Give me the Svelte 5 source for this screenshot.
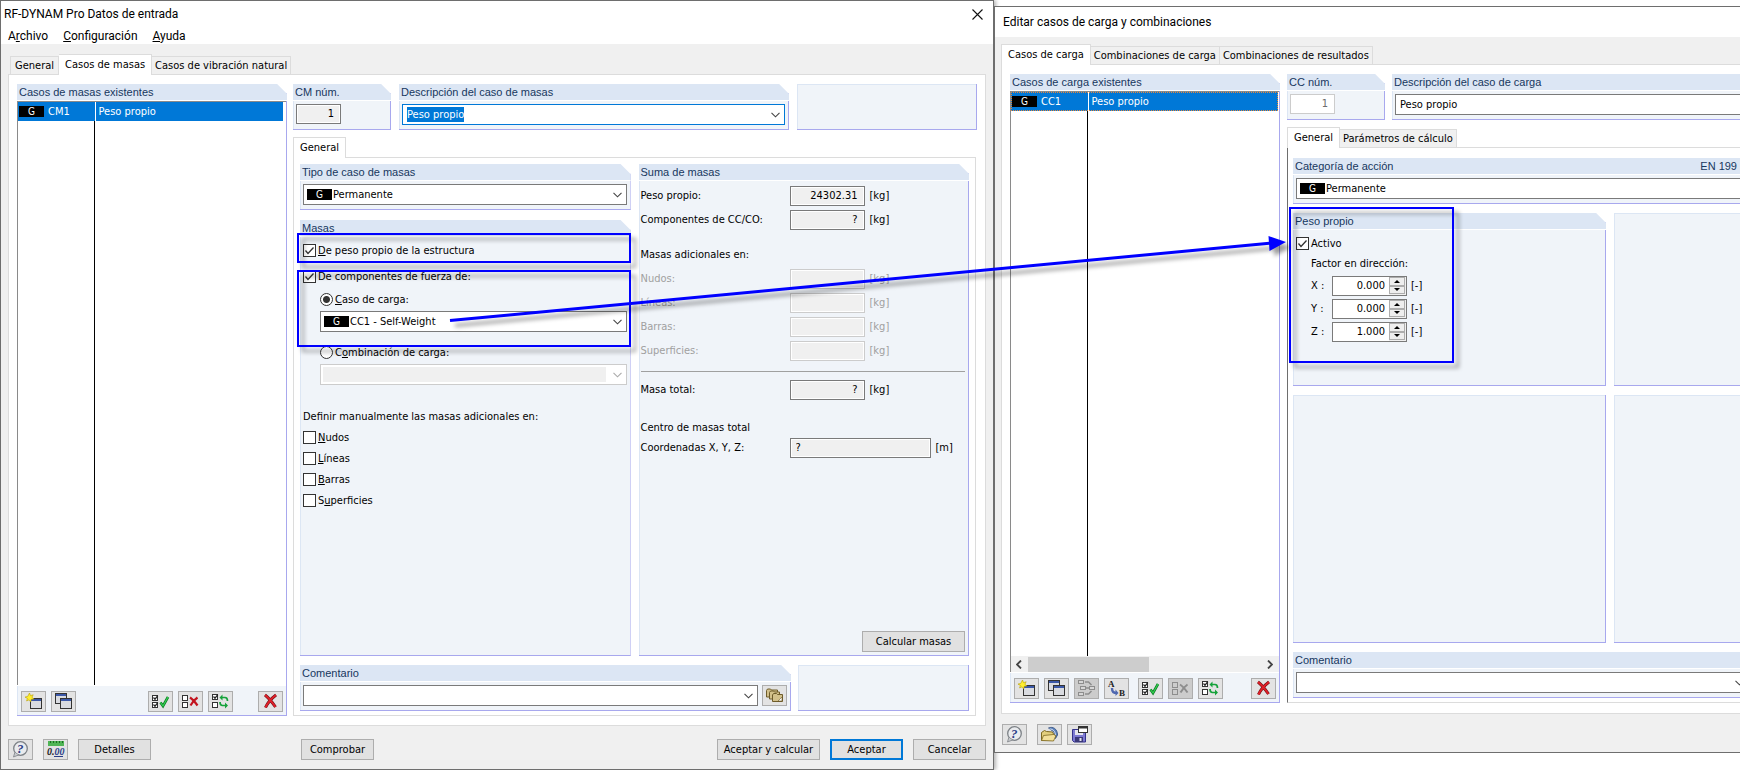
<script lang="ts">
  import { onMount } from "svelte";

  let description = $state("Peso propio");
  let descInput: HTMLInputElement | undefined = $state();

  const sums = [
    { id: "s-self", label: "Peso propio:", value: "24302.31" },
    { id: "s-cc", label: "Componentes de CC/CO:", value: "?" },
  ];
  const extraSums = ["Nudos", "Líneas", "Barras", "Superficies"];
  const extraMasses = [
    { pre: "", key: "N", post: "udos" },
    { pre: "", key: "L", post: "íneas" },
    { pre: "", key: "B", post: "arras" },
    { pre: "S", key: "u", post: "perficies" },
  ];
  let factors = $state([
    { axis: "X", value: "0.000" },
    { axis: "Y", value: "0.000" },
    { axis: "Z", value: "1.000" },
  ]);

  function step(i: number, d: number) {
    factors[i].value = (parseFloat(factors[i].value) + d).toFixed(3);
  }

  onMount(() => {
    descInput?.focus();
    descInput?.select();
  });
</script>

{#snippet chevron()}
  <svg class="chevron" width="9" height="6" viewBox="0 0 9 6"><path d="M.5 .8 4.5 4.8 8.5 .8" fill="none" stroke="currentColor" stroke-width="1.1" /></svg>
{/snippet}

{#snippet miniWindow(x: number, y: number)}
  <rect x={x + 0.5} y={y + 0.5} width="11" height="10" fill="#d9dbe0" stroke="#333" />
  <rect x={x + 1} y={y + 1} width="10" height="2" fill="#3b58a8" />
{/snippet}

{#snippet tick(x: number, y: number, on: boolean)}
  <rect x={x + 0.5} y={y + 0.5} width="5" height="5" fill="#fff" stroke="#333" />
  {#if on}<path d="M{x + 1.5} {y + 2.5}l1.5 1.7 2.8-3.6" fill="none" stroke="#222" stroke-width="1.2" />{/if}
{/snippet}

{#snippet icon(name: string)}
  <svg width="19" height="17" viewBox="0 0 19 17">
    {#if name === "new"}
      {@render miniWindow(6, 5)}
      <path d="M5.5 0l1 2.6 2.7-.8-1.3 2.5 2.1 1.7-2.8.3-.5 2.7-1.6-2.200-2.500 1.200.8-2.600-2.400-1.300 2.700-.7z" fill="#ffee2e" stroke="#b8a000" stroke-width=".6" />
    {:else if name === "copy"}
      {@render miniWindow(1, 0)}
      {@render miniWindow(6, 5)}
    {:else if name === "check"}
      {@render tick(1, 2, true)}
      {@render tick(1, 9, true)}
      <path d="M9.5 9.5l2.5 3.5 5-9" fill="none" stroke="#0b7a22" stroke-width="2.6" />
      <path d="M9.5 9.5l2.5 3.5 5-9" fill="none" stroke="#35d352" stroke-width="1.2" />
    {:else if name === "uncheck"}
      {@render tick(1, 2, false)}
      {@render tick(1, 9, false)}
      <path d="M9 4.5c3 2 5 4.5 7.5 8M16.5 4.5c-3 2-5 4.5-7 8" fill="none" stroke="#c3131d" stroke-width="2.2" />
    {:else if name === "uncheck-off"}
      <g fill="none" stroke="#8d8d8d">
        <rect x="1.5" y="2.5" width="5" height="5" />
        <rect x="1.5" y="9.5" width="5" height="5" />
        <path d="M9 4.5c3 2 5 4.5 7.5 8M16.5 4.5c-3 2-5 4.5-7 8" stroke-width="2" />
      </g>
    {:else if name === "invert"}
      {@render tick(1, 1, true)}
      {@render tick(1, 9, false)}
      <path d="M10.500 4.500h3.500c2 0 2.500 1 2.500 3.500M16 12.500h-4.500c-2 0-2.500-1-2.500-3.500" fill="none" stroke="#16a23a" stroke-width="1.7" />
      <path d="M11.500 1.500v6L8.500 4.500zM14 9.500v6l3-3z" fill="#16a23a" />
    {:else if name === "delete"}
      <path d="M4 2c4 3 7 7 10.500 12M15 2c-4 3-8 7-10.500 12.500" fill="none" stroke="#6b1015" stroke-width="3" />
      <path d="M4 2c4 3 7 7 10.500 12M15 2c-4 3-8 7-10.500 12.500" fill="none" stroke="#e02028" stroke-width="2" />
    {:else if name === "tree"}
      <g fill="#d6d6d6" stroke="#8d8d8d">
        <rect x="1.5" y=".5" width="5" height="3" />
        <rect x="3.5" y="6.500" width="5" height="3" />
        <rect x="1.5" y="12.5" width="5" height="3" />
        <rect x="12.5" y="6.500" width="5" height="3" />
        <path d="M8 2h3.500l3 3M8 14h3.500l3-3M9 8h3" fill="none" stroke-width="1.5" />
      </g>
    {:else if name === "rename"}
      <text x="1" y="7" font-family="Liberation Serif, serif" font-size="9" font-weight="700" fill="#222">A</text>
      <path d="M5 8c0 4 1.500 5 5 5" fill="none" stroke="#4f68b0" stroke-width="2.4" />
      <path d="M8.500 9.500v6.500l3-3z" fill="#4f68b0" />
      <text x="12" y="16" font-family="Liberation Serif, serif" font-size="9" font-weight="700" fill="#222">B</text>
    {:else if name === "help"}
      <circle cx="9.500" cy="7.500" r="6.8" fill="#e9ebee" stroke="#7d8287" stroke-width="1.3" />
      <path d="M3.800 11.500 2.500 16l5-2" fill="#c9ccd0" stroke="#7d8287" stroke-width=".8" />
      <text x="6" y="12" font-family="Liberation Serif, serif" font-size="13" font-weight="700" font-style="italic" fill="#2a3d87">?</text>
    {:else if name === "units"}
      <rect x="2" y="0" width="16" height="5" fill="#4fb455" />
      <path d="M4.500 0v2M7.500 0v2M10.500 0v2M13.500 0v2M16.500 0v2" stroke="#1b6e22" />
      <text x="1" y="14" font-family="Liberation Serif, serif" font-size="10" font-weight="700" font-style="italic" fill="#222">0.<tspan fill="#2a3d87">00</tspan></text>
      <path d="M8 15.500h9" stroke="#2a3d87" />
    {:else if name === "cards"}
      <g fill="#d2c08a" stroke="#6e5c2a">
        <path d="M1.500 3.500l1-1.500h3l1 1h6v7h-11z" />
        <path d="M4.500 5.500l1-1.500h3l1 1h5v7h-10z" />
        <path d="M7.500 8l1-1.500h3l1 1h5v7h-10z" />
      </g>
      <path d="M13 14l4-4v4z" fill="#fff" stroke="#6e5c2a" stroke-width=".6" />
    {:else if name === "open"}
      <path d="M8.500 2C13 0 17.500 3 17.500 9l-2 3.500L14 6z" fill="#5d83bd" stroke="#28467a" stroke-width=".8" />
      <path d="M9.500 3c3.500 0 5.500 2 6 6" fill="none" stroke="#dfe9f7" />
      <path d="M1.500 14.500V6.500l3-2 2 1 6 .5 1 2v6.500z" fill="#e3cf7c" stroke="#7d6820" />
      <path d="M1.500 14.500l2-5 10-1 2.500 1-2.500 5.500z" fill="#f3e09a" stroke="#7d6820" stroke-width=".8" />
    {:else if name === "save"}
      <path d="M2.500 3.500h13v12.500H4L2.500 14.500z" fill="#7d79d2" stroke="#34328a" />
      <rect x="5" y="11" width="8" height="5" fill="#3a3878" />
      <rect x="9.500" y="12" width="2" height="3" fill="#e4e4ee" />
      <rect x="5" y="4" width="8" height="5" fill="#e4e4ee" />
      <rect x="8.500" y=".5" width="9" height="6" fill="#fff" stroke="#333" />
      <path d="M8 1.500h10" stroke="#333" stroke-width="2" />
    {/if}
  </svg>
{/snippet}

{#snippet tool(name: string, label: string, off = false)}
  <button class="tool" aria-label={label} disabled={off}>{@render icon(name)}</button>
{/snippet}

{#snippet caseTable(code: string, focus: boolean)}
  <table class:focus>
    <tbody>
      <tr>
        <td class="code"><span class="badge">G</span>{code}</td>
        <td>Peso propio</td>
      </tr>
    </tbody>
  </table>
{/snippet}

<main class="desktop">
  <section class="window dynam">
    <header class="caption">
      <h1>RF-DYNAM Pro Datos de entrada</h1>
      <button class="close" aria-label="Cerrar">
        <svg width="11" height="11" viewBox="0 0 11 11"><path d="M.5 .5l10 10M10.5 .5l-10 10" stroke="#111" stroke-width="1.1" /></svg>
      </button>
    </header>
    <nav class="menu">
      <button>A<u>r</u>chivo</button>
      <button><u>C</u>onfiguración</button>
      <button><u>A</u>yuda</button>
    </nav>

    <div class="client">
      <div class="tabs">
        <button>General</button>
        <button class="active">Casos de masas</button>
        <button>Casos de vibración natural</button>
      </div>
      <div class="page">
        <div class="group cases">
          <h2>Casos de masas existentes</h2>
          <div class="list">{@render caseTable("CM1", false)}</div>
          <div class="toolbar">
            <div class="tools">
              {@render tool("new", "Nuevo")}
              {@render tool("copy", "Copiar")}
            </div>
            <div class="tools middle">
              {@render tool("check", "Seleccionar todo")}
              {@render tool("uncheck", "Deseleccionar todo")}
              {@render tool("invert", "Invertir selección")}
            </div>
            {@render tool("delete", "Eliminar")}
          </div>
        </div>

        <div class="detail">
          <div class="top">
            <div class="group number">
              <h2><label for="cm-no">CM núm.</label></h2>
              <div class="body"><input id="cm-no" class="field short" value="1" readonly /></div>
            </div>
            <div class="group grow">
              <h2><label for="cm-desc">Descripción del caso de masas</label></h2>
              <div class="body">
                <div class="combo editing">
                  <input id="cm-desc" bind:this={descInput} bind:value={description} />
                  {@render chevron()}
                </div>
              </div>
            </div>
            <div class="group plain corner"></div>
          </div>

          <div class="tabs">
            <button class="active">General</button>
          </div>
          <div class="sheet">
            <div class="columns">
              <div class="stack">
                <div class="group">
                  <h2><label for="cm-type">Tipo de caso de masas</label></h2>
                  <div class="body">
                    <div class="combo">
                      <span class="badge">G</span>
                      <select id="cm-type"><option>Permanente</option></select>
                      {@render chevron()}
                    </div>
                  </div>
                </div>

                <div class="marked">
                  <div class="group">
                    <h2>Masas</h2>
                    <div class="body">
                      <label class="option"><input type="checkbox" checked /><span><u>D</u>e peso propio de la estructura</span></label>
                      <label class="option forces"><input type="checkbox" checked /><span>De componentes de fuerza de:</span></label>
                      <div class="nested">
                        <label class="option"><input type="radio" name="source" checked /><span><u>C</u>aso de carga:</span></label>
                        <div class="combo">
                          <span class="badge">G</span>
                          <select aria-label="Caso de carga"><option>CC1 - Self-Weight</option></select>
                          {@render chevron()}
                        </div>
                        <label class="option second"><input type="radio" name="source" /><span>C<u>o</u>mbinación de carga:</span></label>
                        <div class="combo off">
                          <select aria-label="Combinación de carga" disabled></select>
                          {@render chevron()}
                        </div>
                      </div>
                      <p class="manual">Definir manualmente las masas adicionales en:</p>
                      {#each extraMasses as m}
                        <label class="option"><input type="checkbox" /><span>{m.pre}<u>{m.key}</u>{m.post}</span></label>
                      {/each}
                    </div>
                  </div>
                  <div class="mark self-weight"></div>
                  <div class="mark components"></div>
                </div>
              </div>

              <div class="group sum">
                <h2>Suma de masas</h2>
                <div class="body">
                  {#each sums as s}
                    <div class="row">
                      <label for={s.id}>{s.label}</label>
                      <input id={s.id} class="field" value={s.value} readonly />
                      <span>[kg]</span>
                    </div>
                  {/each}
                  <p class="extra">Masas adicionales en:</p>
                  {#each extraSums as s}
                    <div class="row off">
                      <label for="s-{s}">{s}:</label>
                      <input id="s-{s}" class="field" disabled />
                      <span>[kg]</span>
                    </div>
                  {/each}
                  <hr />
                  <div class="row">
                    <label for="s-total">Masa total:</label>
                    <input id="s-total" class="field" value="?" readonly />
                    <span>[kg]</span>
                  </div>
                  <p class="centre">Centro de masas total</p>
                  <div class="row tight">
                    <label for="s-centre">Coordenadas X, Y, Z:</label>
                    <input id="s-centre" class="field wide" value="?" readonly />
                    <span>[m]</span>
                  </div>
                  <button class="push long calc">Calcular masas</button>
                </div>
              </div>
            </div>

            <div class="bottom">
              <div class="group grow">
                <h2><label for="cm-note">Comentario</label></h2>
                <div class="body note">
                  <div class="combo"><input id="cm-note" />{@render chevron()}</div>
                  {@render tool("cards", "Comentarios predefinidos")}
                </div>
              </div>
              <div class="group plain"></div>
            </div>
          </div>
        </div>
      </div>

      <footer>
        {@render tool("help", "Ayuda")}
        {@render tool("units", "Unidades y decimales")}
        <button class="push">Detalles</button>
        <button class="push verify">Comprobar</button>
        <div class="grow"></div>
        <button class="push long">Aceptar y calcular</button>
        <button class="push default">Aceptar</button>
        <button class="push">Cancelar</button>
      </footer>
    </div>
  </section>

  <section class="window edit">
    <header class="caption">
      <h1>Editar casos de carga y combinaciones</h1>
    </header>

    <div class="client">
      <div class="tabs">
        <button class="active">Casos de carga</button>
        <button>Combinaciones de carga</button>
        <button>Combinaciones de resultados</button>
      </div>
      <div class="page">
        <div class="group cases">
          <h2>Casos de carga existentes</h2>
          <div class="list">{@render caseTable("CC1", true)}</div>
          <div class="scroll">
            <svg width="6" height="9" viewBox="0 0 6 9"><path d="M5 .5l-4 4 4 4" fill="none" stroke="#444" stroke-width="1.8" /></svg>
            <div class="track"><div class="thumb"></div></div>
            <svg width="6" height="9" viewBox="0 0 6 9"><path d="M1 .5l4 4-4 4" fill="none" stroke="#444" stroke-width="1.8" /></svg>
          </div>
          <div class="toolbar">
            <div class="tools">
              {@render tool("new", "Nuevo")}
              {@render tool("copy", "Copiar")}
              {@render tool("tree", "Combinar", true)}
              {@render tool("rename", "Renumerar")}
            </div>
            <div class="tools middle">
              {@render tool("check", "Seleccionar todo")}
              {@render tool("uncheck-off", "Deseleccionar todo", true)}
              {@render tool("invert", "Invertir selección")}
            </div>
            {@render tool("delete", "Eliminar")}
          </div>
        </div>

        <div class="detail">
          <div class="top">
            <div class="group number">
              <h2><label for="cc-no">CC núm.</label></h2>
              <div class="body"><input id="cc-no" class="field short" value="1" disabled /></div>
            </div>
            <div class="group grow">
              <h2><label for="cc-desc">Descripción del caso de carga</label></h2>
              <div class="body">
                <div class="combo"><input id="cc-desc" value="Peso propio" /></div>
              </div>
            </div>
          </div>

          <div class="tabs">
            <button class="active">General</button>
            <button>Parámetros de cálculo</button>
          </div>
          <div class="sheet">
            <div class="group">
              <h2><label for="cc-cat">Categoría de acción</label><span>EN 199</span></h2>
              <div class="body">
                <div class="combo">
                  <span class="badge">G</span>
                  <select id="cc-cat"><option>Permanente</option></select>
                </div>
              </div>
            </div>
            <div class="quad">
              <div class="marked">
                <div class="group">
                  <h2>Peso propio</h2>
                  <div class="body">
                    <label class="option"><input type="checkbox" checked /><span>Activo</span></label>
                    <div class="factors">
                      <p>Factor en dirección:</p>
                      {#each factors as f, i}
                        <div class="factor">
                          <label for="f-{f.axis}">{f.axis} :</label>
                          <div class="spin">
                            <input id="f-{f.axis}" bind:value={f.value} />
                            <div class="arrows">
                              <button aria-label="Aumentar {f.axis}" onclick={() => step(i, 0.1)}><i class="up"></i></button>
                              <button aria-label="Reducir {f.axis}" onclick={() => step(i, -0.1)}><i class="down"></i></button>
                            </div>
                          </div>
                          <span>[-]</span>
                        </div>
                      {/each}
                    </div>
                  </div>
                </div>
                <div class="mark weight"></div>
              </div>
              <div class="group plain"></div>
              <div class="group plain"></div>
              <div class="group plain"></div>
            </div>
            <div class="group">
              <h2><label for="cc-note">Comentario</label></h2>
              <div class="body">
                <div class="combo"><input id="cc-note" />{@render chevron()}</div>
              </div>
            </div>
          </div>
        </div>
      </div>

      <footer>
        {@render tool("help", "Ayuda")}
        <div class="tools">
          {@render tool("open", "Abrir")}
          {@render tool("save", "Guardar")}
        </div>
      </footer>
    </div>
  </section>

  <!-- arrow from the selected load case to its self-weight settings -->
  <svg class="arrow" width="1740" height="770" viewBox="0 0 1740 770">
    <path d="M450 320.5 1272 243" stroke="#00f" stroke-width="3" />
    <path d="M1268.500 236 1286 242 1269.500 251z" fill="#00f" />
  </svg>
</main>

<style>
  :global(body) {
    background: #fff;
  }
  .desktop {
    --grey: #f0f0f0;
    --line: #dcdcdc;
    --head: #dce6f4;
    --body: #f0f4f9;
    --edge: #a8a8ee;
    --frame: #7a7a7a;
    --blue: #0078d7;
    position: relative;
    display: grid;
    grid-template-columns: 994fr 746fr;
    min-height: 100vh;
    overflow: hidden;
    color: #000;
    font: 11px/20px "DejaVu Sans Condensed", "DejaVu Sans", sans-serif;
  }
  .desktop * {
    box-sizing: border-box;
  }
  button,
  input,
  select {
    margin: 0;
    padding: 0;
    border: 0;
    border-radius: 0;
    background: none;
    color: inherit;
    font: inherit;
    outline: none;
    min-width: 0;
  }
  h1,
  h2,
  p {
    margin: 0;
    font-weight: 400;
  }
  svg {
    display: block;
    flex-shrink: 0;
  }
  .grow {
    flex: 1;
    min-width: 0;
  }

  /* windows */
  .window {
    display: flex;
    flex-direction: column;
    min-width: 0;
    border: 1px solid #6e6e6e;
    background: #fff;
  }
  .dynam {
    box-shadow: 2px 0 4px rgba(0, 0, 0, 0.3);
  }
  /* runs past the right side of the desktop */
  .edit {
    margin: 6px -14px 17px 0;
  }
  .caption {
    display: flex;
    align-items: center;
    justify-content: space-between;
    height: 24px;
    padding: 2px 10px 0 3px;
  }
  .edit .caption {
    height: 30px;
    padding: 0 0 0 8px;
  }
  h1,
  .menu button {
    font: 12px/16px Roboto, sans-serif;
  }
  .menu {
    display: flex;
    gap: 15px;
    height: 19px;
    padding: 2px 0 0 7px;
  }
  .menu button {
    height: 17px;
  }
  .client {
    flex: 1;
    display: flex;
    flex-direction: column;
    padding: 10px 7px 9px;
    background: var(--grey);
  }
  .edit .client {
    padding: 7px 0 7px 6px;
  }

  /* tabs */
  .tabs {
    display: flex;
    align-items: flex-end;
    height: 21px;
    margin-bottom: -1px;
    padding-left: 2px;
  }
  .tabs button {
    height: 19px;
    padding: 0 3px;
    border: 1px solid var(--line);
    border-left-width: 0;
    background: var(--grey);
    line-height: 17px;
    white-space: nowrap;
  }
  .tabs button:first-child {
    padding: 0 4px;
    border-left-width: 1px;
  }
  .tabs .active {
    position: relative;
    height: 21px;
    padding: 0 6px 2px;
    border-bottom: 0;
    background: #fff;
  }
  .tabs .active:first-child {
    margin-left: -2px;
    padding: 0 6px 2px;
  }
  .page {
    flex: 1;
    display: grid;
    grid-template-columns: 270px minmax(0, 1fr);
    gap: 6px;
    padding: 9px 8px;
    border: 1px solid var(--line);
    background: #fff;
  }
  .edit .page {
    gap: 7px;
    padding: 9px 0 10px 8px;
    border-right: 0;
  }

  /* groups */
  .group {
    display: flex;
    flex-direction: column;
    min-width: 0;
    border: solid var(--edge);
    border-width: 0 1px 1px 0;
    background: var(--body);
    box-shadow: inset 1px 0 var(--head);
    clip-path: polygon(0 0, calc(100% - 10px) 0, 100% 10px, 100% 100%, 0 100%);
  }
  .group.plain {
    box-shadow: inset 1px 1px var(--head);
    clip-path: none;
  }
  h2 {
    display: flex;
    justify-content: space-between;
    height: 17px;
    margin-right: -1px;
    padding: 0 2px;
    border-bottom: 1px solid #fff;
    background: var(--head);
    color: #17375e;
    font: 11px/17px "Liberation Sans", Arial, sans-serif;
  }
  .edit .sheet h2 {
    padding-right: 16px;
  }
  .body {
    flex: 1;
    padding: 3px 3px 4px;
  }

  /* case list */
  .list {
    flex: 1;
    padding-right: 3px;
    border: solid #8a8a8a;
    border-width: 1px 0 0 1px;
    background: linear-gradient(#000, #000) 76px 0 / 1px 100% no-repeat #fff;
  }
  .edit .list {
    padding-right: 1px;
  }
  table {
    width: 100%;
    border-collapse: collapse;
    table-layout: fixed;
    background: var(--blue);
    color: #fff;
  }
  table.focus {
    outline: 1px dotted #e8873a;
    outline-offset: -1px;
  }
  td {
    height: 19px;
    padding: 0 0 0 3px;
    line-height: 19px;
  }
  td.code {
    width: 77px;
    padding-left: 1px;
    border-right: 1px solid #fff;
  }
  .badge {
    display: inline-block;
    flex-shrink: 0;
    width: 25px;
    height: 11px;
    margin-right: 4px;
    background: #000;
    color: #fff;
    font-size: 10px;
    line-height: 11px;
    text-align: center;
  }
  .toolbar {
    display: flex;
    padding: 5px 3px 3px 4px;
    border-top: 1px solid #fff;
  }
  .tools {
    display: flex;
    gap: 5px;
  }
  .tools.middle {
    margin: 0 25px 0 auto;
  }
  .edit .tools.middle {
    margin-right: 28px;
  }
  .scroll {
    display: flex;
    align-items: center;
    height: 16px;
    padding: 0 6px 0 5px;
    border-left: 1px solid #8a8a8a;
    background: var(--grey);
  }
  .track {
    flex: 1;
    height: 15px;
    padding: 0 6px;
  }
  .thumb {
    width: 52%;
    height: 15px;
    background: #cdcdcd;
  }

  /* buttons */
  .tool {
    display: flex;
    align-items: center;
    justify-content: center;
    width: 25px;
    height: 21px;
    border: 1px solid #adadad;
    background: #e3e3e3;
  }
  .tool:disabled {
    background: #ccc;
  }
  .push {
    width: 73px;
    height: 21px;
    border: 1px solid #adadad;
    background: #e1e1e1;
    line-height: 19px;
    white-space: nowrap;
  }
  .push.long {
    width: 103px;
  }
  .push.default {
    border: 2px solid var(--blue);
    line-height: 17px;
  }
  .verify {
    margin-left: 140px;
  }
  footer {
    display: flex;
    gap: 10px;
    padding-top: 13px;
  }
  .edit footer {
    padding: 10px 0 0 1px;
  }

  /* fields */
  .field {
    width: 75px;
    height: 20px;
    padding-right: 6px;
    border: 1px solid var(--frame);
    background: #f0f0f0;
    box-shadow: inset 0 0 0 1px #fff;
    text-align: right;
  }
  .field:disabled {
    border-color: #ccc;
    color: #6d6d6d;
  }
  .field.short {
    display: block;
    width: 45px;
  }
  .edit .field.short {
    background: #fff;
  }
  .field.wide {
    width: 141px;
    padding-left: 5px;
    text-align: left;
  }
  .combo {
    display: flex;
    align-items: center;
    height: 21px;
    padding: 0 4px 0 3px;
    border: 1px solid var(--frame);
    background: #fff;
  }
  .combo.editing {
    border-color: var(--blue);
  }
  .combo .badge {
    margin: 0 1px 0 0;
  }
  .combo input,
  .combo select {
    flex: 1;
    height: 15px;
    line-height: 15px;
    appearance: none;
  }
  .combo input {
    padding-left: 1px;
  }
  .combo input::selection {
    background: var(--blue);
    color: #fff;
  }
  .combo.off {
    padding-left: 2px;
    border-color: #ccc;
  }
  .combo.off select {
    margin-right: 7px;
    background: #f0f0f0;
    opacity: 1;
  }
  .chevron {
    color: #444;
  }
  .off .chevron {
    color: #aaa;
  }
  .option {
    display: flex;
    align-items: center;
    gap: 2px;
    height: 21px;
  }
  .option input {
    appearance: none;
    width: 13px;
    height: 13px;
    border: 1px solid #333;
    background: #fff;
  }
  .option input[type="checkbox"]:checked {
    background: #fff url("data:image/svg+xml,%3Csvg xmlns='http://www.w3.org/2000/svg' viewBox='0 0 11 11'%3E%3Cpath d='M1.500 5.500 4 8.500 9.500 2.500' fill='none' stroke='%23333' stroke-width='1.300'/%3E%3C/svg%3E");
  }
  .option input[type="radio"] {
    border-radius: 50%;
  }
  .option input[type="radio"]:checked {
    background: radial-gradient(circle, #333 3px, #fff 4px);
  }

  /* right-hand side of each window */
  .detail {
    display: flex;
    flex-direction: column;
    min-width: 0;
  }
  .top {
    display: flex;
    gap: 8px;
    height: 46px;
    margin-bottom: 7px;
  }
  .edit .top {
    gap: 7px;
  }
  .number {
    width: 98px;
  }
  .corner {
    width: 180px;
  }
  .sheet {
    flex: 1;
    display: flex;
    flex-direction: column;
    gap: 9px;
    margin-right: 1px;
    padding: 6px 6px 4px;
    border: 1px solid var(--line);
  }
  .edit .sheet {
    margin-right: 0;
    padding: 10px 0 4px 5px;
    border-left-color: #6e6e6e;
    border-right: 0;
  }
  .columns {
    flex: 1;
    display: grid;
    grid-template-columns: minmax(0, 1fr) minmax(0, 1fr);
    gap: 8px;
  }
  .stack {
    display: flex;
    flex-direction: column;
    gap: 10px;
  }
  .marked {
    position: relative;
    flex: 1;
    display: flex;
  }
  .marked .group {
    flex: 1;
  }
  .forces {
    margin-top: 5px;
  }
  .nested {
    display: grid;
    gap: 1px;
    padding: 2px 0 0 17px;
  }
  .nested .second {
    margin-top: 9px;
  }
  .manual {
    margin-top: 22px;
  }
  .sum .body {
    display: flex;
    flex-direction: column;
    padding-left: 2px;
  }
  .row {
    display: flex;
    align-items: center;
    margin-top: 4px;
  }
  .row:first-child {
    margin-top: 2px;
  }
  .row.tight {
    margin-top: 0;
  }
  .row label {
    width: 149px;
  }
  .row span {
    margin-left: 5px;
  }
  .row.off {
    color: #a0a0a0;
  }
  .extra {
    margin-top: 15px;
  }
  hr {
    width: 100%;
    margin: 10px 0 4px;
    border: 0;
    border-top: 1px solid #a0a0a0;
  }
  .centre {
    margin-top: 18px;
  }
  .calc {
    margin: auto 0 -1px auto;
  }
  .bottom {
    display: flex;
    gap: 7px;
    height: 46px;
  }
  .bottom .plain {
    width: 171px;
  }
  .note {
    display: flex;
    gap: 4px;
  }
  .note .combo {
    flex: 1;
  }
  .quad {
    flex: 1;
    display: grid;
    grid-template-columns: 313px minmax(0, 1fr);
    grid-template-rows: 173px minmax(200px, 1fr);
    gap: 9px 8px;
  }

  /* spin fields */
  .factors {
    display: grid;
    gap: 3px;
    padding-left: 15px;
  }
  .factors p {
    height: 19px;
  }
  .factor {
    display: flex;
    align-items: center;
  }
  .factor label {
    width: 21px;
  }
  .factor span {
    margin-left: 4px;
  }
  .spin {
    display: flex;
    width: 75px;
    height: 20px;
    border: 1px solid var(--frame);
    background: #fff;
  }
  .spin input {
    flex: 1;
    padding-right: 4px;
    text-align: right;
  }
  .arrows {
    display: grid;
    width: 17px;
    padding: 0 1px 1px 0;
    background: var(--grey);
  }
  .arrows button {
    display: grid;
    place-items: center;
    border: 1px solid #adadad;
    background: #eee;
  }
  .up,
  .down {
    border: solid transparent;
    border-width: 0 3px 3px;
    border-bottom-color: #000;
  }
  .down {
    border-width: 3px 3px 0;
    border-top-color: #000;
  }

  /* annotations drawn over the windows */
  .mark {
    position: absolute;
    border: 2px solid #00f;
    filter: drop-shadow(5px 5px 2px rgba(0, 0, 0, 0.4));
    pointer-events: none;
  }
  .self-weight {
    top: 13px;
    left: -3px;
    right: 0;
    height: 30px;
  }
  .components {
    top: 50px;
    left: -3px;
    right: 0;
    height: 77px;
  }
  .weight {
    top: -6px;
    left: -4px;
    width: 165px;
    height: 156px;
  }
  .arrow {
    position: absolute;
    top: 0;
    left: 0;
    filter: drop-shadow(5px 5px 2px rgba(0, 0, 0, 0.4));
    pointer-events: none;
  }
</style>
